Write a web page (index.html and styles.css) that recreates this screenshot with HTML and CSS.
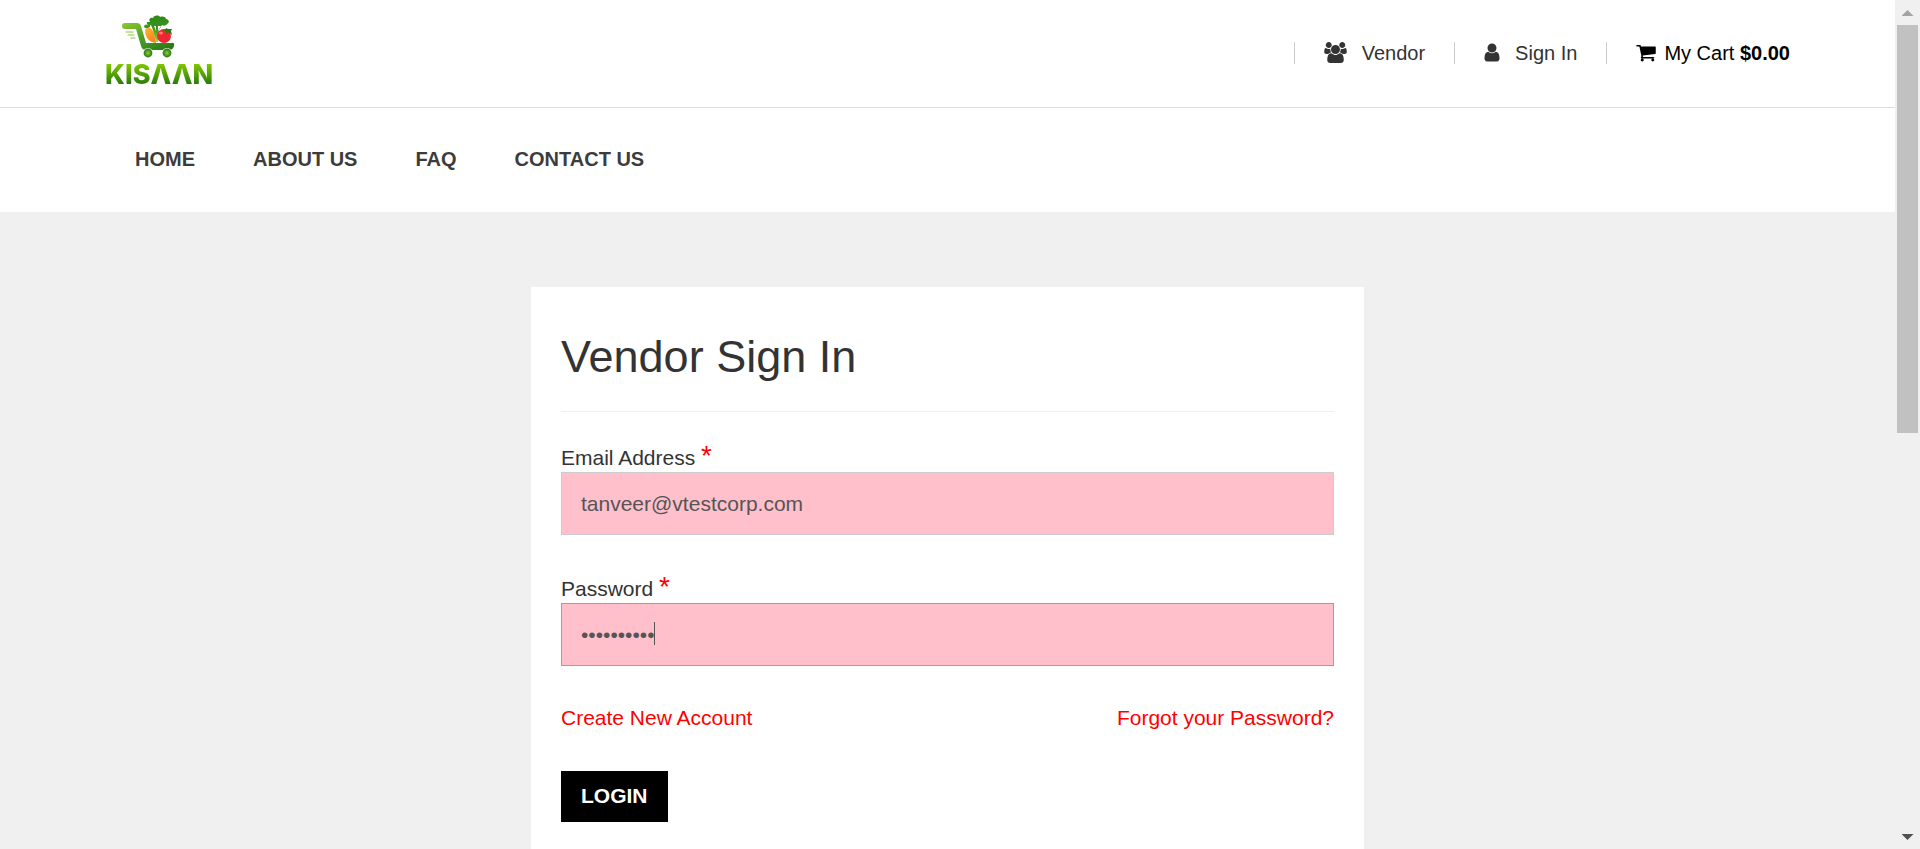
FILE: index.html
```html
<!DOCTYPE html>
<html lang="en">
<head>
<meta charset="utf-8">
<title>Kisaan - Vendor Sign In</title>
<link rel="stylesheet" href="styles.css">
</head>
<body>
<div class="page">
  <header class="topbar">
    <a class="logo" href="#" aria-label="Kisaan">
      <svg class="logo-art" viewBox="0 0 54 44" aria-hidden="true">
        <defs>
          <linearGradient id="green" x1="0" y1="0" x2="1" y2="1">
            <stop offset="0" stop-color="#8ccb2a"/><stop offset=".45" stop-color="#4f9f2a"/><stop offset="1" stop-color="#23750f"/>
          </linearGradient>
          <linearGradient id="leaf" x1="0" y1="0" x2="0" y2="1">
            <stop offset="0" stop-color="#2f8a16"/><stop offset=".5" stop-color="#3c9420"/><stop offset="1" stop-color="#a5d83a"/>
          </linearGradient>
          <linearGradient id="carrot" x1="0" y1="0" x2="1" y2="1">
            <stop offset="0" stop-color="#ffb52b"/><stop offset="1" stop-color="#f47b20"/>
          </linearGradient>
          <radialGradient id="wheel">
            <stop offset="0" stop-color="#8bcf3c"/><stop offset="1" stop-color="#23750f"/>
          </radialGradient>
        </defs>
        <path fill="url(#leaf)" d="M29 7c-2-3 1-5 3-4 1-3 6-3 7-1 3-1 6 0 6 2 3 0 4 4 1 5-1 2-4 2-5 1l-3 5-1 12h-2l-3-12-2-5c-2 1-5-1-4-3z"/>
        <path fill="#fff" d="M33 11l2 5v-5zM37 11v5l3-5z"/>
        <path fill="url(#carrot)" d="M24 15c3-4 7-2 9 3l2 10c-7-1-11-5-11-13z"/>
        <path fill="#3f961c" d="M23 12c0-2 2-3 3-2 2-1 4 0 3 2-2 1-4 2-6 0z"/>
        <circle cx="43" cy="21" r="7" fill="#ed2731"/>
        <ellipse cx="40" cy="18" rx="2" ry="1.5" fill="#ff7976"/>
        <path fill="#2a7a12" d="M41 14l3 1 1-2 2 1 4 0-1 2 1 4-4-3-1 2-2-3z"/>
        <path fill="url(#green)" d="M4 8h12q3 0 4 3l5 17h25q4-1 3 3-1 4-5 4H25q-4 0-5-4l-5-17H4q-3 0-3-3t3-3z"/>
        <g stroke="#86c836" stroke-width="1.2" stroke-linecap="round"><path d="M5 17h7M7 20h6M10 23h4"/></g>
        <circle cx="27" cy="38" r="5" fill="#fff"/><circle cx="27" cy="38" r="4.4" fill="url(#wheel)"/>
        <circle cx="46" cy="38" r="5" fill="#fff"/><circle cx="46" cy="38" r="4.4" fill="url(#wheel)"/>
      </svg>
      <span class="logo-word">KISΛΛN</span>
    </a>
    <ul class="tools">
      <li class="tool"><a class="tool-link" href="#">
        <svg class="icon icon-users" viewBox="0 0 1920 1792" aria-hidden="true"><path d="M593 896q-162 5-265 128h-134q-82 0-138-40.5t-56-118.5q0-353 124-353 6 0 43.5 21t97.5 42.5 119 21.5q67 0 133-23-5 37-5 66 0 139 81 256zm1071 637q0 120-73 189.5t-194 69.5h-874q-121 0-194-69.5t-73-189.5q0-53 3.5-103.5t14-109 26.5-108.5 43-97.5 62-81 85.5-53.5 111.5-20q10 0 43 21.5t73 48 107 48 135 21.5 135-21.5 107-48 73-48 43-21.5q61 0 111.5 20t85.5 53.5 62 81 43 97.5 26.5 108.5 14 109 3.5 103.5zm-1024-1277q0 106-75 181t-181 75-181-75-75-181 75-181 181-75 181 75 75 181zm704 384q0 159-112.5 271.5t-271.5 112.5-271.5-112.5-112.5-271.5 112.5-271.5 271.5-112.5 271.5 112.5 112.5 271.5zm576 225q0 78-56 118.5t-138 40.5h-134q-103-123-265-128 81-117 81-256 0-29-5-66 66 23 133 23 59 0 119-21.5t97.5-42.5 43.5-21q124 0 124 353zm-128-609q0 106-75 181t-181 75-181-75-75-181 75-181 181-75 181 75 75 181z"/></svg>
        Vendor</a></li>
      <li class="tool"><a class="tool-link" href="#">
        <svg class="icon icon-user" viewBox="256 0 1280 1792" aria-hidden="true"><path d="M1536 1399q0 109-62.5 187t-150.5 78h-854q-88 0-150.5-78t-62.5-187q0-85 8.5-160.5t31.5-152 58.5-131 94-89 134.5-34.5q131 128 313 128t313-128q76 0 134.5 34.5t94 89 58.5 131 31.5 152 8.5 160.5zm-256-887q0 159-112.5 271.5t-271.5 112.5-271.5-112.5-112.5-271.5 112.5-271.5 271.5-112.5 271.5 112.5 112.5 271.5z"/></svg>
        Sign In</a></li>
      <li class="tool"><a class="tool-link cart" href="#">
        <svg class="icon icon-cart" viewBox="64 0 1664 1792" aria-hidden="true"><path d="M704 1536q0 52-38 90t-90 38-90-38-38-90 38-90 90-38 90 38 38 90zm896 0q0 52-38 90t-90 38-90-38-38-90 38-90 90-38 90 38 38 90zm128-1088v512q0 24-16.5 42.5t-40.5 21.5l-1044 122q13 60 13 70 0 16-24 64h920q26 0 45 19t19 45-19 45-45 19h-1024q-26 0-45-19t-19-45q0-11 8-31.5t16-36 21.5-40 15.5-29.5l-177-823h-204q-26 0-45-19t-19-45 19-45 45-19h256q16 0 28.5 6.5t19.5 15.5 13 24.5 8 26 5.5 29.5 4.5 26h1201q26 0 45 19t19 45z"/></svg>
        <span>My Cart <strong>$0.00</strong></span></a></li>
    </ul>
  </header>
  <nav class="menu">
    <a class="menu-link" href="#">HOME</a>
    <a class="menu-link" href="#">ABOUT US</a>
    <a class="menu-link" href="#">FAQ</a>
    <a class="menu-link" href="#">CONTACT US</a>
  </nav>
  <main class="content">
    <form class="card">
      <h1 class="title">Vendor Sign In</h1>
      <div class="field">
        <label class="label" for="email">Email Address <span class="required">*</span></label>
        <input class="input" id="email" type="email" value="tanveer@vtestcorp.com">
      </div>
      <div class="field">
        <label class="label" for="password">Password <span class="required">*</span></label>
        <div class="input-wrap">
          <input class="input active" id="password" type="password" value="tanveer123">
          <span class="caret"></span>
        </div>
      </div>
      <div class="links">
        <a class="link" href="#">Create New Account</a>
        <a class="link" href="#">Forgot your Password?</a>
      </div>
      <button class="login" type="button">LOGIN</button>
    </form>
  </main>
</div>
<div class="scrollbar" aria-hidden="true">
  <span class="arrow arrow-up"></span>
  <span class="track"><span class="thumb"></span></span>
  <span class="arrow arrow-down"></span>
</div>
</body>
</html>
```
FILE: styles.css
```css
* {
  box-sizing: border-box;
}

body {
  display: grid;
  grid-template-columns: 1fr 25px;
  height: 100vh;
  margin: 0;
  overflow: hidden;
  background: #f0f0f0;
  color: #333;
  font-family: "Liberation Sans", Arial, sans-serif;
  font-size: 21px;
  line-height: 30px;
}

a {
  color: inherit;
  text-decoration: none;
}

.page {
  display: flex;
  flex-direction: column;
  min-height: 0;
  overflow: hidden;
}

.topbar {
  display: flex;
  flex: none;
  justify-content: space-between;
  align-items: center;
  padding: 15px 105px 17px;
  border-bottom: 1px solid #ddd;
  background: #fff;
}

.logo {
  display: flex;
  flex-direction: column;
  gap: 1px;
}

.logo-art {
  width: 54px;
  height: 44px;
  margin-left: 16px;
}

.logo-word {
  background: linear-gradient(#7fc600 15%, #23750f 85%);
  background-clip: text;
  color: transparent;
  font-family: Inter, sans-serif;
  font-size: 27px;
  font-weight: 800;
  line-height: 30px;
}

.tools {
  display: flex;
  margin: 0;
  padding: 0;
  list-style: none;
}

.tool {
  padding: 0 29px;
  border-left: 1px solid #ccc;
  font-size: 20px;
  line-height: 22px;
}

.tool:last-child {
  padding-right: 0;
}

.tool-link {
  display: flex;
  align-items: center;
  gap: 15px;
}

.cart {
  gap: 8px;
  color: #000;
}

.icon {
  flex: none;
  height: 21px;
  fill: currentColor;
}

.icon-users {
  width: 23px;
}

.icon-user {
  width: 16px;
}

.icon-cart {
  width: 20px;
}

.menu {
  display: flex;
  flex: none;
  gap: 58px;
  padding: 36px 135px 38px;
  background: #fff;
}

.menu-link {
  color: #3c3c3c;
  font-size: 20px;
  font-weight: 700;
}

.content {
  flex: none;
  padding: 75px 30px;
}

.card {
  max-width: 833px;
  margin: 0 auto;
  padding: 45px 30px 60px;
  background: #fff;
}

.title {
  margin: 0 0 30px;
  padding-bottom: 29px;
  border-bottom: 1px solid #eee;
  font-size: 45px;
  font-weight: 400;
  line-height: 50px;
}

.field {
  margin-bottom: 38px;
}

.label {
  display: block;
  height: 30px;
  line-height: 28px;
}

.required {
  color: #f00;
  font-size: 28px;
  line-height: 1;
}

.input-wrap {
  position: relative;
}

.input {
  display: block;
  width: 100%;
  height: 63px;
  padding: 0 19px;
  border: 1px solid #ccc;
  border-radius: 0;
  outline: 0;
  background: #ffc0cb;
  color: #555;
  font: inherit;
}

.active {
  border-color: #66afe9;
}

.caret {
  position: absolute;
  top: 19px;
  left: 93px;
  width: 1px;
  height: 23px;
  background: #555;
}

.links {
  display: flex;
  justify-content: space-between;
  margin-bottom: 39px;
  line-height: 28px;
}

.link {
  color: #f00;
}

.login {
  padding: 10px 20px 11px;
  border: 0;
  background: #000;
  color: #fff;
  font: inherit;
  font-weight: 700;
}

.scrollbar {
  display: flex;
  flex-direction: column;
  align-items: center;
  justify-content: space-between;
  padding: 10px 2px 9px;
  background: #f0f0f0;
}

.arrow {
  width: 12px;
  height: 6px;
}

.arrow-up {
  background: #a3a3a3;
  clip-path: polygon(50% 0, 100% 100%, 0 100%);
}

.arrow-down {
  background: #505050;
  clip-path: polygon(0 0, 100% 0, 50% 100%);
}

.track {
  flex: 1;
  width: 100%;
  margin: 9px 0;
}

.thumb {
  display: block;
  height: 51%;
  background: #c1c1c1;
}
```
